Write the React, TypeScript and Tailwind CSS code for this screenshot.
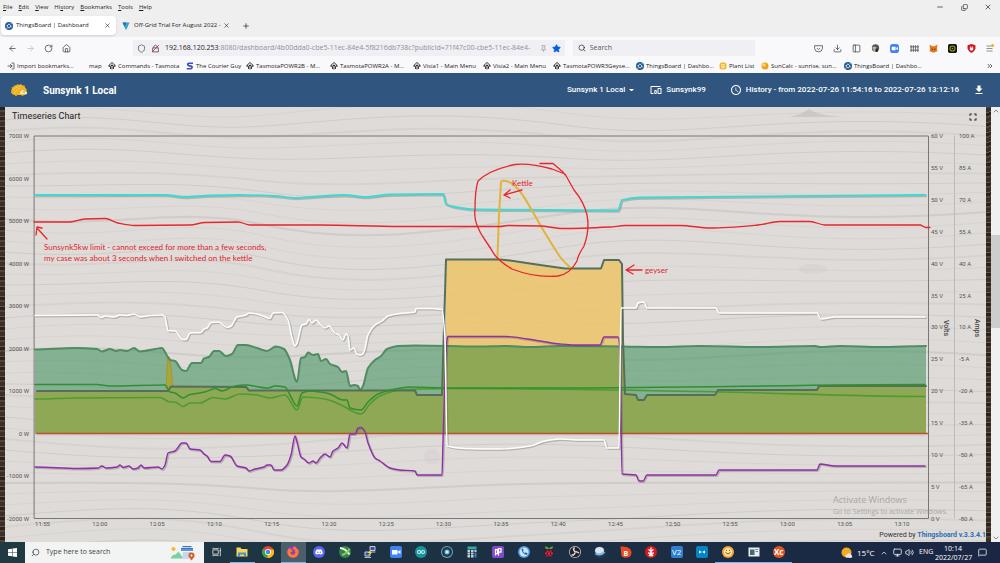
import type { ReactNode } from 'react'
import {
  ArrowLeft, ArrowRight, ChevronsRight, ChevronUp, ChevronDown, Copy, Download, House,
  LogIn, MessageSquare, Minus, Monitor, PanelLeft, Pin, Plus, RotateCw, Search, Shield, Star, Volume2, X,
} from 'lucide-react'
import { FaDiscord, FaFirefoxBrowser } from 'react-icons/fa'
import { MdAccessTime, MdDevicesOther, MdFileDownload, MdFullscreen } from 'react-icons/md'
import { SiArduino } from 'react-icons/si'

/* ---------- small drawings ---------- */

function ThingsBoardIcon() {
  return (
    <svg viewBox="0 0 16 16" className="size-2 shrink-0">
      <circle cx="8" cy="8" r="8" fill="#245a96" />
      <rect x="5" y="5" width="6" height="6" rx="1.5" fill="none" stroke="#fff" strokeWidth="1.6" transform="rotate(35 8 8)" />
      <path d="M11 4l2-2M3 14l2-3M3 7l2 0M11 9l3 1" stroke="#fff" strokeWidth="1.2" />
    </svg>
  )
}

function TasmotaIcon() {
  return (
    <svg viewBox="0 0 16 16" className="size-2 shrink-0" fill="none" stroke="#222" strokeWidth="1.8">
      <path d="M8 15V5M8 1L1 7.5l2 2.2M8 1l7 6.5-2 2.2M5 14V9l3-3 3 3v5M3.5 9V6M12.5 9V6" />
    </svg>
  )
}

function CourierIcon() {
  return (
    <svg viewBox="0 0 16 16" className="size-2 shrink-0" fill="none" stroke="#3c4ec4" strokeWidth="3.4">
      <path d="M14 2.5H7Q3.5 2.5 3.5 5t3 2.7l3.5.6q3 .7 2 3.2-.8 2-4 2H1.5" />
    </svg>
  )
}

function PlantIcon() {
  return (
    <svg viewBox="0 0 16 16" className="size-2 shrink-0">
      <rect x="1" y="1" width="14" height="14" rx="5" fill="#f4b52c" />
      <path d="M4 5.5h8M4 8.5h8M5 11.5h6" stroke="#fff" strokeWidth="1.4" />
    </svg>
  )
}

function SunIcon() {
  return (
    <svg viewBox="0 0 16 16" className="size-2 shrink-0">
      <circle cx="8" cy="8" r="7" fill="#f0a01e" />
      <circle cx="6" cy="6" r="3.5" fill="#ffd866" />
    </svg>
  )
}

function Hedgehog() {
  return (
    <svg viewBox="0 0 34 24" className="h-3 w-[17px] shrink-0">
      <path d="M0 13L2 10 1 7 5 6 6 3l4 0 3-3 3 2 4-2 3 3 4 0 1 4 3 3 0 9-6 3H6L3 20 0 18l1-2z" fill="#f0b323" />
      <path d="M5 11l3-2M9 15l3-3M9 7l4-1M15 5l4-1M14 10l3-1M6 17l3 1" stroke="#fbdf74" strokeWidth="1.5" />
      <path d="M19 15q3-5 7-2l7 4q0 4-6 4h-8q-2-3 0-6z" fill="#fbeaa8" />
      <circle cx="26" cy="16" r="1.2" fill="#333" />
      <circle cx="33" cy="18" r="1" fill="#333" />
      <path d="M8 21v3h4v-3M21 21v3h4v-3" fill="#d99a1d" />
    </svg>
  )
}

/* ---------- browser chrome ---------- */

const menus = [
  ['', 'F', 'ile'],
  ['', 'E', 'dit'],
  ['', 'V', 'iew'],
  ['Hi', 's', 'tory'],
  ['', 'B', 'ookmarks'],
  ['', 'T', 'ools'],
  ['', 'H', 'elp'],
]

const bookmarks: { label: string; icon: ReactNode; width: string }[] = [
  { label: 'Import bookmarks...', icon: <LogIn className="size-2 shrink-0" />, width: 'w-[82px]' },
  { label: 'map', icon: null, width: 'w-[19px]' },
  { label: 'Commands - Tasmota', icon: <TasmotaIcon />, width: 'w-[78px]' },
  { label: 'The Courier Guy', icon: <CourierIcon />, width: 'w-[60px]' },
  { label: 'TasmotaPOWR2B - M...', icon: <TasmotaIcon />, width: 'w-[84px]' },
  { label: 'TasmotaPOWR2A - M...', icon: <TasmotaIcon />, width: 'w-[83px]' },
  { label: 'Visia1 - Main Menu', icon: <TasmotaIcon />, width: 'w-[70px]' },
  { label: 'Visia2 - Main Menu', icon: <TasmotaIcon />, width: 'w-[70px]' },
  { label: 'TasmotaPOWR3Geyse...', icon: <TasmotaIcon />, width: 'w-[83px]' },
  { label: 'ThingsBoard | Dashbo...', icon: <ThingsBoardIcon />, width: 'w-[83px]' },
  { label: 'Plant List', icon: <PlantIcon />, width: 'w-[42px]' },
  { label: 'SunCalc - sunrise, sun...', icon: <SunIcon />, width: 'w-[83px]' },
  { label: 'ThingsBoard | Dashbo...', icon: <ThingsBoardIcon />, width: 'w-[83px]' },
]

const extensions: { name: string; icon: ReactNode }[] = [
  {
    name: 'Pocket',
    icon: (
      <svg viewBox="0 0 16 16" className="size-[9px]" fill="none" stroke="#555" strokeWidth="1.5">
        <path d="M1 3h14v5q-1 6-7 6T1 8zM5 7l3 3 3-3" />
      </svg>
    ),
  },
  { name: 'Downloads', icon: <Download className="size-[9px] text-[#444]" /> },
  { name: 'Sidebar', icon: <PanelLeft className="size-[9px] text-[#444]" /> },
  {
    name: 'Greasemonkey',
    icon: (
      <svg viewBox="0 0 16 16" className="size-[9px]">
        <circle cx="8" cy="7" r="6.5" fill="#555" />
        <path d="M2 6q4-4 9 1l-2 7H6z" fill="#c2b299" />
        <path d="M8 8h4v6H8z" fill="#222" />
      </svg>
    ),
  },
  {
    name: 'Zoom',
    icon: (
      <svg viewBox="0 0 16 16" className="size-[9px]">
        <rect width="16" height="16" rx="5" fill="#3d82f6" />
        <path d="M3 5h7v6H3zM11 7l3-2v6l-3-2z" fill="#fff" />
      </svg>
    ),
  },
  {
    name: 'Grid',
    icon: (
      <svg viewBox="0 0 16 16" className="size-[9px]" stroke="#555" strokeWidth="1.5">
        <path d="M2 2v12M6 2v12M10 2v12M14 2v12M0 5h16M0 11h16" />
      </svg>
    ),
  },
  {
    name: 'MetaMask',
    icon: (
      <svg viewBox="0 0 16 16" className="size-[9px]">
        <path d="M1 1l5 3h4l5-3-1 8 1 4-4 1-2 1H7l-2-1-4-1 1-4z" fill="#e5761b" />
        <path d="M4 8l3 1-1 2zM12 8L9 9l1 2z" fill="#4b2a13" />
      </svg>
    ),
  },
  {
    name: 'Shield',
    icon: (
      <svg viewBox="0 0 16 16" className="size-[9px]">
        <rect width="16" height="16" rx="3" fill="#161616" />
        <circle cx="8" cy="8" r="4.5" fill="none" stroke="#9a9a1c" strokeWidth="2" />
        <circle cx="8" cy="8" r="1.5" fill="#9a9a1c" />
      </svg>
    ),
  },
  {
    name: 'Ad blocker',
    icon: (
      <svg viewBox="0 0 16 16" className="size-[9px]">
        <path d="M8 0l7 2v6q-1 5-7 8-6-3-7-8V2z" fill="#d3141c" />
        <path d="M5 6h6v4q-3 3-6 0zM6 4h1v3H6zM9 4h1v3H9z" fill="#fff" />
      </svg>
    ),
  },
  {
    name: 'Menu',
    icon: (
      <svg viewBox="0 0 16 16" className="size-2">
        <path d="M1 4h9M1 9h12M1 14h12" stroke="#555" strokeWidth="1.3" />
        <circle cx="13" cy="3" r="3" fill="#f5a623" />
      </svg>
    ),
  },
]

function BrowserChrome() {
  return (
    <div className="bg-[#efeff0] font-['Open_Sans',sans-serif] text-[6px] text-[#1c1c22]">
      <div className="flex h-[14px] items-center justify-between pl-[3px]">
        <nav className="flex gap-[6px] leading-[10px]">
          {menus.map(([pre, key, post]) => (
            <button key={key + post}>
              {pre}<u>{key}</u>{post}
            </button>
          ))}
        </nav>
        <div className="flex">
          <button aria-label="Minimize" className="grid w-6 place-items-center"><Minus className="size-2" /></button>
          <button aria-label="Restore" className="grid w-6 place-items-center"><Copy className="size-[7px] -scale-x-100 rotate-180" /></button>
          <button aria-label="Close" className="grid w-6 place-items-center"><X className="size-2" /></button>
        </div>
      </div>
      <div className="flex h-[23px] items-center whitespace-nowrap">
        <div className="ml-px flex h-[19px] w-[115px] items-center rounded-sm bg-white px-1 shadow-sm">
          <ThingsBoardIcon />
          <span className="ml-[3px] flex-1">ThingsBoard | Dashboard</span>
          <button aria-label="Close tab" className="mr-px"><X className="size-[7px]" /></button>
        </div>
        <div className="ml-[6px] flex items-center">
          <svg viewBox="0 0 16 16" className="size-2 shrink-0">
            <path d="M1 1h14L9 15H7z" fill="#3fa0cc" />
            <path d="M1 1h8L5 9z" fill="#1c77a6" />
          </svg>
          <span className="ml-1">Off-Grid Trial For August 2022 -</span>
          <button aria-label="Close tab" className="ml-[2px]"><X className="size-[7px]" /></button>
        </div>
        <button aria-label="New tab" className="ml-3"><Plus className="size-2" /></button>
      </div>
      <div className="flex h-[22px] items-center bg-[#f9f9fb] text-[7px]">
        <div className="flex w-[133px] items-center gap-[9px] pl-2 text-[#444]">
          <button aria-label="Back"><ArrowLeft className="size-[9px]" /></button>
          <button aria-label="Forward" className="text-[#bbb]"><ArrowRight className="size-[9px]" /></button>
          <button aria-label="Reload"><RotateCw className="size-[9px]" /></button>
          <button aria-label="Home"><House className="size-[9px]" /></button>
        </div>
        <div className="flex h-4 min-w-0 flex-[438] items-center gap-[5px] bg-[#f0f0f4] px-1">
          <Shield className="size-[9px] shrink-0 text-[#555]" />
          <svg viewBox="0 0 16 16" className="size-[9px] shrink-0" fill="none" stroke="#555" strokeWidth="1.5">
            <rect x="3" y="7" width="10" height="7" />
            <path d="M5 7V4q3-4 6 0v3" />
            <path d="M2 14L14 2" stroke="#d7264c" />
          </svg>
          <div className="min-w-0 flex-1 whitespace-nowrap text-[#8f8f9d]">
            <span className="text-[#1c1c22]">192.168.120.253</span>
            :8080/dashboard/4b00dda0-cbe5-11ec-84e4-5f8216db738c?publicId=71f47c00-cbe5-11ec-84e4-
          </div>
          <Pin className="size-[7px] shrink-0 text-[#888]" />
          <Star className="size-[9px] shrink-0 fill-[#0060df] text-[#0060df]" />
        </div>
        <label className="ml-2 flex h-4 flex-[178] items-center gap-1 bg-[#f0f0f4] px-[5px]">
          <Search className="size-2 shrink-0" />
          <input aria-label="Search" placeholder="Search" className="w-full min-w-0 bg-transparent outline-none placeholder:text-[#555]" />
        </label>
        <div className="ml-[54px] flex w-[191px] justify-around">
          {extensions.map((e) => (
            <button key={e.name} aria-label={e.name} className="grid w-[19px] place-items-center">{e.icon}</button>
          ))}
        </div>
      </div>
      <div className="flex h-[14px] items-center bg-[#f9f9fb] pl-[7px]">
        {bookmarks.map((b, i) => (
          <a key={i} href="#" className={`flex shrink-0 items-center gap-[2px] whitespace-nowrap ${b.width}`}>
            {b.icon}
            <span>{b.label}</span>
          </a>
        ))}
        <button aria-label="More bookmarks" className="mr-[6px] ml-auto"><ChevronsRight className="size-2" /></button>
      </div>
    </div>
  )
}

/* ---------- dashboard ---------- */

function DashboardHeader() {
  return (
    <header className="flex h-[34px] items-center bg-[#305680] pr-[15px] pl-[11px] text-[8px] font-medium text-white">
      <Hedgehog />
      <h1 className="ml-[15px] flex-1 text-[10px] font-bold">Sunsynk 1 Local</h1>
      <button className="flex items-center gap-1">
        Sunsynk 1 Local
        <svg viewBox="0 0 8 4" className="w-[5px]"><path d="M0 0h8L4 4z" fill="#fff" /></svg>
      </button>
      <button className="ml-4 flex items-center gap-1"><MdDevicesOther className="size-3" />Sunsynk99</button>
      <button className="ml-6 flex items-center gap-1">
        <MdAccessTime className="size-3" />History - from 2022-07-26 11:54:16 to 2022-07-26 13:12:16
      </button>
      <button aria-label="Download" className="ml-[14px]"><MdFileDownload className="size-3" /></button>
    </header>
  )
}

const wattTicks = [7000, 6000, 5000, 4000, 3000, 2000, 1000, 0, -1000, -2000]
const voltTicks = [60, 55, 50, 45, 40, 35, 30, 25, 20, 15, 10, 5, 0]
const ampTicks = [100, 85, 70, 55, 40, 25, 10, -5, -20, -35, -50, -65, -80]
const timeTicks = ['11:55', '12:00', '12:05', '12:10', '12:15', '12:20', '12:25', '12:30', '12:35', '12:40', '12:45', '12:50', '12:55', '13:00', '13:05', '13:10']

const solar = '35,349.5 75,348 97,349 102,351.5 110,349 116,351 120,350 127,351 134,348 140,351.5 155,349 162,348 165,352 170,360 175,361 182,370 186,371 192,363 201,363 204,358.5 209,357 214,351 219,351 226,356 232,354 238,345 246,345 257,348 267,351 276,346.5 284,349 290,360 296,381 297,382 301,358 305,357 308,352.5 313,355 318,354 321,361 326,359 330,364 338,367 342,372 346,371 350,386 354,385 358,386 360,390 363,386 368,368 375,360 381,356 387,349 398,346 415,345.5 480,346.5 505,346 530,347 560,346 620,346.5 660,347 700,346 760,347 815,346 820,347 840,346 880,347 926,346'
const load = '37,391 168,391 171,386.5 246,387 249,390.5 415,390.5 417,395 442,395 446,259.5 500,259.5 510,260.5 540,265 565,268.5 601,268.5 604,260 619,260 622,264 623,340 625,394 636,395 638,400 644,400 647,395 715,395 718,390 817,390 819,386 926,386'
const battery = '35,315.5 97,315 101,317.5 105,316 114,317 120,315 127,315.5 134,314 140,317 150,315.5 162,315 165,317 168,330.5 175,331 183,339.5 186,339.5 190,333 201,332.5 204,329 207,328 211,322.5 219,322 227,327.5 231,326 237,317 246,315 249,313 257,314 263,316 270,318.5 273,313 282,312.5 288,320 292,338 295,346 297,343 302,325 306,324 309,319.5 312,323 316,320 320,324 325,328 329,326 335,333 339,335 343,340 346,334 348,336 350,350 354,348 357,354 361,355 364,352 368,335 375,325 382,321 388,316 400,313.5 415,312 416,308.5 430,308.5 442,309.5 445,340 447,446 465,448.5 500,449 530,446 545,441 560,439 580,440 604,440 607,448 619,448 621,308 636,308 638,303 644,302 647,308 716,308 719,313 817,313 821,319 835,317 925,317'
const current = '35,467 78,468.5 98,468 102,466 106,468 117,467 120,465 123,467.5 129,466 133,469 138,468 141,465 144,468 158,467 162,469 165,465 168,453 175,451 182,443 186,443 190,449 200,450 204,454 207,456 211,461.5 220,461.5 225,455 230,456 237,466 246,468 249,471 255,469 264,467 267,465 271,465 274,470 281,470 287,465 291,455 295,436 297,442 301,457 304,459 309,463 313,461 316,463 320,458 325,454 330,457 333,451 338,448 342,443 347,448 350,434 355,434 358,428 361,427.5 365,432 368,443 375,458 380,461 390,468 400,470 415,471 417,475 442,475 443,440 447,340 448,336.5 505,336.5 540,341 560,344 575,345 600,345 604,337 618,337 620,350 622,474 636,475 639,481 643,481 647,475 716,475 719,470 817,470 820,464 835,466 925,466'
const gridA = '35,384.5 97,384.5 110,386 165,385 170,392 175,393 183,398 190,394.5 205,392 215,388.5 222,391 235,386 245,385 268,388 275,386 285,387 290,395 297,406 302,393 310,391 320,392 330,394 343,400 347,400 350,408 361,410 368,402 378,394 395,389 410,387 446,388 560,388 925,384.5'
const gridB = '35,399 75,398 160,397.5 170,402 175,402 183,406.5 190,403 200,403 213,397.5 225,399 240,394 257,395 270,398 285,395 297,410 303,397 325,399 345,407 350,410 361,414 370,404 380,396 400,390 446,388.5 700,391.5 925,396.5'
const volts = '35,195 165,195 185,197 210,195.5 240,195 275,196 295,198 310,197 345,195 365,197 390,194.5 443,194 446,204 455,207 475,209.5 618,210.5 622,200 640,197.5 925,195'
const limit = '34,222 70,222 85,219 105,218.5 118,223 135,225.5 190,225 205,222.5 238,222 250,225 320,225 400,226.5 500,226.5 508,225.5 540,226 563,228.5 610,227 625,225.5 680,225.5 710,228 758,225 780,221.5 810,221.5 825,225 920,225 926,227.5 930,227.5'

// monotone cubic through the points, so the curve never overshoots a step
function smooth(points: string) {
  const p = points.split(' ').map((s) => s.split(',').map(Number))
  const slope = p.slice(1).map(([x, y], i) => (y - p[i][1]) / (x - p[i][0]))
  const tangent = p.map((_, i) => {
    const a = slope[i - 1] ?? 0
    const b = slope[i] ?? 0
    return a * b <= 0 ? 0 : (2 * a * b) / (a + b)
  })
  return p.slice(1).reduce((d, [x, y], i) => {
    const [x0, y0] = p[i]
    const h = (x - x0) / 3
    return `${d}C${x0 + h} ${y0 + tangent[i] * h} ${x - h} ${y - tangent[i + 1] * h} ${x} ${y}`
  }, `M${p[0][0]} ${p[0][1]}`)
}

function Series({ points, color, width }: { points: string; color: string; width: number }) {
  const d = smooth(points)
  return (
    <>
      <path d={d} transform="translate(1 1)" stroke="#555" strokeOpacity="0.3" strokeWidth={width + 0.5} />
      <path d={d} stroke={color} strokeWidth={width} />
    </>
  )
}

function WoodGrain() {
  const lines = Array.from({ length: 46 }, (_, i) => {
    const y = i * 11 - 20
    const a = 12 * Math.sin(i * 0.35)
    const b = 16 * Math.cos(i * 0.22)
    return `M0 ${y} C120 ${y - a} 170 ${y + b} 260 ${y + 6} S430 ${y - b} 560 ${y + a / 2} S760 ${y - a} 981 ${y + b / 2}`
  })
  return (
    <svg viewBox="0 0 981 435" preserveAspectRatio="none" className="absolute inset-0 size-full" fill="none">
      {lines.map((d, i) => (
        <path key={i} d={d} stroke="#aaa6a4" strokeOpacity={i % 3 === 0 ? 0.28 : 0.15} strokeWidth={i % 4 === 0 ? 2 : 1} />
      ))}
      <path d="M784 10q12-2 20-8 8 6 32 8z" fill="#bcb8b5" fillOpacity="0.5" />
      <ellipse cx="808" cy="162" rx="14" ry="5" fill="#aaa" fillOpacity="0.12" />
      <ellipse cx="427" cy="350" rx="8" ry="8" fill="#aab" fillOpacity="0.12" />
    </svg>
  )
}

function TimeseriesChart() {
  return (
    <svg viewBox="5 127 981 415" className="relative block w-full" fill="none" strokeLinejoin="round" strokeLinecap="round">
      {/* areas */}
      <path d={`${smooth(solar)}V434H35Z`} fill="#4f9a6a" fillOpacity="0.64" />
      <polygon points="446,260 500,260 510,260.5 540,265 565,268.5 601,268.5 604,260 619,260 622,264 623,346 446,346" fill="#edc36a" fillOpacity="0.85" />
      <polygon points="35,391 168,391 171,387 246,387 249,391 415,391 417,395 442,395 445,346 623,346 625,394 636,395 638,400 644,400 647,395 715,395 718,390 817,390 819,386 926,386 926,434 35,434" fill="#8fa852" fillOpacity="0.95" />
      <polygon points="166,388 168,356 170,358 173,386" fill="#a8a53e" stroke="#a39a2c" />

      {/* frame and the second right axis */}
      <path d="M34.5 136H928.5V518.5H34.5Z" stroke="#777" />
      <path d="M954.5 136V518" stroke="#bbb" />

      {/* series */}
      <path d={smooth(solar)} stroke="#4f8c62" strokeWidth="2" />
      <path d={smooth(gridB)} stroke="#4f9a32" strokeWidth="1.6" />
      <polyline points={load} stroke="#55705a" strokeWidth="2" />
      <path d={smooth(gridA)} stroke="#2f8f32" strokeWidth="1.5" />
      <path d="M35 435H925" stroke="#e3b9d5" />
      <path d="M37 433.5H928" stroke="#b5552a" strokeWidth="1.4" />
      <Series points={current} color="#9130a6" width={1.4} />
      <Series points={battery} color="#fff" width={1.5} />
      <Series points={volts} color="#3fd8d2" width={1.8} />
      <path d="M497.5 257L499 215L501 182Q502 180 506 181C520 184 528 205 545 233S562 260 570 267" stroke="#e0b43c" strokeWidth="2" />

      {/* hand-drawn notes */}
      <g stroke="#e8262b" strokeWidth="1.3">
        <path d={smooth(limit)} />
        <path d="M478 181C485 174 498 168 515 164.5Q530 163 552 169L565 174L574 190Q584 202 587 215Q590 230 584 246Q578 255 577 261Q570 274 558 276Q535 278 512 269Q500 262 494 254Q490 247 485 240Q473 223 475 210Q475 190 478 181M540 163.5H553L563 172L565 175" />
        <path d="M522 190L504 195M510 190L504 195L510 198M642 270H626M634 265L626 270L633 274M47 239L37 228M36 235L37 227L42 228" />
      </g>
      <g fill="#e0262b" className="font-['Lato',sans-serif] text-[8px]">
        <text x="44" y="250">Sunsynk5kw limit - cannot exceed for more than a few seconds,</text>
        <text x="44" y="261">my case was about 3 seconds when I switched on the kettle</text>
        <text x="512" y="186">Kettle</text>
        <text x="645" y="273">geyser</text>
      </g>

      {/* axis labels */}
      <g fill="#545454" className="text-[6px]">
        {wattTicks.map((t, i) => <text key={t} x="29" y={138 + i * 42.5} textAnchor="end">{t} W</text>)}
        {voltTicks.map((t, i) => <text key={t} x="931" y={138 + i * 31.9}>{t} V</text>)}
        {ampTicks.map((t, i) => <text key={t} x="959" y={138 + i * 31.9}>{t} A</text>)}
        {timeTicks.map((t, i) => <text key={t} x={42.5 + i * 57.3} y="526" textAnchor="middle">{t}</text>)}
      </g>
      <g fill="#444" textAnchor="middle" className="text-[7px] font-medium">
        <text transform="translate(944 328) rotate(90)">Volts</text>
        <text transform="translate(975 328) rotate(90)">Amps</text>
      </g>
      <g fill="#aaa8a6" className="font-['Open_Sans',sans-serif]">
        <text x="833" y="503" className="text-[9px]">Activate Windows</text>
        <text x="833" y="514" className="text-[7px]">Go to Settings to activate Windows.</text>
      </g>
    </svg>
  )
}

function Dashboard() {
  return (
    <main className="flex flex-1 bg-[repeating-linear-gradient(178deg,#2c221d_0_3px,#544438_3px_5px,#3b2e27_5px_9px,#65564a_9px_10px)]">
      <section className="relative ml-[5px] min-w-0 flex-1 bg-[#dfdbd8]">
        <WoodGrain />
        <div className="relative flex h-5 items-center justify-between pr-[7px] pl-[7px]">
          <h2 className="text-[9px] text-[#222]">Timeseries Chart</h2>
          <button aria-label="Fullscreen" className="text-[#333]"><MdFullscreen className="size-3" /></button>
        </div>
        <TimeseriesChart />
        <p className="absolute right-0 bottom-[2px] text-[7px] leading-[10px] whitespace-nowrap text-[#333]">
          Powered by <a href="#" className="font-bold text-[#2a6fb5]">Thingsboard v.3.3.4.1</a>
        </p>
      </section>
      <div className="ml-[5px] flex w-[9px] flex-col items-center bg-[#f0f0f0] text-[#555]">
        <ChevronUp className="size-2" />
        <div className="mt-[120px] h-[93px] w-full bg-[#cdcdcd]" />
        <ChevronDown className="mt-auto size-2" />
      </div>
    </main>
  )
}

/* ---------- taskbar ---------- */

function Disc({ fill, children }: { fill: string; children?: ReactNode }) {
  return (
    <svg viewBox="0 0 24 24" className="size-3">
      <circle cx="12" cy="12" r="12" fill={fill} />
      {children}
    </svg>
  )
}

function Tile({ fill, children }: { fill: string; children?: ReactNode }) {
  return (
    <svg viewBox="0 0 24 24" className="size-3">
      <rect width="24" height="24" rx="4" fill={fill} />
      {children}
    </svg>
  )
}

const apps: { name: string; icon: ReactNode; open?: boolean; active?: boolean }[] = [
  { name: 'Task View', icon: <svg viewBox="0 0 24 24" className="size-[10px]" fill="none" stroke="#ddd" strokeWidth="2"><path d="M2 7h13v10H2zM2 2v2h13V2M2 22v-2h13v2M20 2v20M18 9h4" /></svg> },
  { name: 'File Explorer', open: true, icon: <svg viewBox="0 0 24 24" className="size-3"><path d="M1 3h8l2 3h12v15H1z" fill="#f8d45c" /><path d="M4 13h16v8h-4v-4H8v4H4z" fill="#3f92d2" /></svg> },
  {
    name: 'Chrome',
    icon: (
      <Disc fill="#e94335">
        <path d="M12 12L2 5.5A12 12 0 0 0 11 24z" fill="#34a353" />
        <path d="M12 12h-1v12A12 12 0 0 0 23 7H12z" fill="#fbbc05" />
        <circle cx="12" cy="12" r="6" fill="#fff" />
        <circle cx="12" cy="12" r="4.5" fill="#4285f4" />
      </Disc>
    ),
  },
  { name: 'Firefox', active: true, open: true, icon: <span className="grid size-3 place-items-center rounded-full bg-[#8a3fc8]"><FaFirefoxBrowser className="size-3 text-[#ff7a2c]" /></span> },
  { name: 'Discord', icon: <span className="grid size-3 place-items-center rounded-full bg-[#5865f2]"><FaDiscord className="size-2 text-white" /></span> },
  { name: 'Remote', icon: <Disc fill="#38804b"><path d="M2 4q10 0 19 13" stroke="#e4f4dc" strokeWidth="4" fill="none" /><path d="M21 5q-3 9-15 13" stroke="#7ccf58" strokeWidth="4" fill="none" /></Disc> },
  { name: 'PuTTY', icon: <svg viewBox="0 0 24 24" className="size-3"><path d="M12 1h10v8H12zM2 12h10v8H2z" fill="#3152a8" stroke="#ccc" strokeWidth="2" /><path d="M15 9l-6 4 6 0-6 5" stroke="#fbe03c" strokeWidth="2" fill="none" /><path d="M1 23h13M13 12h10" stroke="#bbb" strokeWidth="2" /></svg> },
  { name: 'Zoom', icon: <Tile fill="#3e82f4"><path d="M4 8h11v9H4zM16 11l5-3v8l-5-3z" fill="#fff" /></Tile> },
  { name: 'Arduino', icon: <span className="grid size-3 place-items-center rounded-full bg-[#16969a]"><SiArduino className="size-2 text-white" /></span> },
  { name: 'Recorder', icon: <Disc fill="#7f9dad"><circle cx="12" cy="12" r="10" fill="#1d3a4c" /><circle cx="12" cy="12" r="5" fill="#6cc3e8" /><circle cx="12" cy="12" r="2" fill="#fff" /></Disc> },
  { name: 'Calculator', icon: <svg viewBox="0 0 24 24" className="size-3"><path d="M3 1h18v6H3z" fill="#36aaa2" /><path d="M3 8h5v4H3zM10 8h5v4h-5zM17 8h4v4h-4zM3 13h5v4H3zM10 13h5v4h-5zM3 18h5v5H3zM10 18h5v5h-5z" fill="#c6d2d8" /><path d="M17 13h4v10h-4z" fill="#3d7fc0" /></svg> },
  { name: 'Packet', icon: <Tile fill="#8348cc"><path d="M7 19V7h4v8H6M13 19V5h5v7h-5" stroke="#fff" strokeWidth="2.5" fill="none" /></Tile> },
  { name: 'Phone', icon: <Disc fill="#4b9be0"><circle cx="12" cy="12" r="9" fill="#c8e4f8" /><path d="M7 6q1 10 11 12l1-4-4-1-2 1q-2-1-3-4l1-2-1-3z" fill="#2464b0" /></Disc> },
  {
    name: 'Raspberry Pi',
    icon: (
      <svg viewBox="0 0 24 24" className="size-3">
        <path d="M12 6Q4 8 4 1q7-1 8 5 1-6 8-5 0 7-8 5z" fill="#5fa52a" />
        <path d="M5 9q7-4 14 0 4 6-1 11-6 5-12 0-5-5-1-11z" fill="#4a0f20" />
        <path d="M7 9h4v4H7zM13 9h4v4h-4zM4 13h4v4H4zM10 13h4v5h-4zM16 13h4v4h-4zM7 18h4v3H7zM13 18h4v3h-4z" fill="#d6264e" />
      </svg>
    ),
  },
  { name: 'OBS', icon: <Disc fill="#c8c8c8"><circle cx="12" cy="12" r="10.5" fill="#23232a" /><path d="M11 3q-4 5 1 8M20 14q-5-4-8-2M5 18q6 1 7-5" stroke="#ddd" strokeWidth="3" fill="none" /></Disc> },
  { name: 'Steam', icon: <Disc fill="#243a52"><ellipse cx="11" cy="9" rx="9" ry="7" fill="#d8e4ee" /><path d="M3 15q10 5 18-3" stroke="#7fb7e4" strokeWidth="4" fill="none" /></Disc> },
  { name: 'Bitdefender', icon: <svg viewBox="0 0 24 24" className="size-3"><path d="M1 1q14-1 20 6 5 8-2 15-12 4-16-2z" fill="#ee4a22" /><text x="7" y="19" fill="#fff" className="text-[14px] font-bold">B</text></svg> },
  { name: 'Cherry', icon: <Disc fill="#d8191f"><path d="M12 3v18M7 7l5 4 5-4M6 14h12M8 20l4-5 4 5" stroke="#fff" strokeWidth="2.5" fill="none" /></Disc> },
  { name: 'VNC', icon: <Tile fill="#2f80d4"><text x="2" y="18" fill="#fff" className="text-[16px]">V2</text></Tile> },
  { name: 'Multi', icon: <Tile fill="#0784c4"><path d="M6 9l6 3 6-3v6l-6-3-6 3z" fill="#e8fbff" /></Tile> },
  { name: 'Smiley', open: true, icon: <Disc fill="#f2a83a"><circle cx="12" cy="12" r="8" fill="#fbe3a0" /><path d="M7 13q5 6 10 0M8 9h2M14 9h2" stroke="#8a5a10" strokeWidth="2" fill="none" /></Disc> },
  { name: 'Viewer', open: true, icon: <svg viewBox="0 0 24 24" className="size-3"><path d="M1 3h22v18H1z" fill="#e8eef0" /><path d="M4 7h9v11H4z" fill="#3c6e70" /><path d="M15 7h5M15 11h5" stroke="#789" strokeWidth="2" /></svg> },
  { name: 'XCTU', open: true, icon: <Disc fill="#e2551f"><text x="2" y="18" fill="#fff" className="text-[16px] font-bold">Xc</text></Disc> },
]

function Taskbar() {
  return (
    <footer className="flex h-[21px] items-center bg-linear-to-r from-[#1f3a42] to-[#1a2644] font-['Open_Sans',sans-serif] text-[7px] text-white">
      <button aria-label="Start" className="grid w-[25px] place-items-center">
        <svg viewBox="0 0 18 18" className="size-[9px]" fill="#fff"><path d="M0 2.5L8 1.3V8.5H0zM9 1.2L18 0V8.5H9zM0 9.5H8V16.7L0 15.5zM9 9.5H18V18L9 16.8z" /></svg>
      </button>
      <label className="flex h-full w-[179px] items-center bg-[#f2f3f3] pr-2 pl-[6px] text-[#444]">
        <Search className="size-[9px] shrink-0 -scale-x-100" />
        <input aria-label="Type here to search" placeholder="Type here to search" className="ml-[6px] min-w-0 flex-1 bg-transparent outline-none placeholder:text-[#444]" />
        <svg viewBox="0 0 52 32" className="h-4 w-[26px]">
          <circle cx="7" cy="8" r="4" fill="#f6b82c" />
          <path d="M1 27q3-8 10-8l6-6 10 14z" fill="#7dd0a4" />
          <path d="M22 7h24M25 3h18M22 10h24" stroke="#3775c8" strokeWidth="2.5" />
          <path d="M26 14h17l-6 14H24z" fill="#c8d8e8" />
          <path d="M43 31l-6-8q-1-8 6-8t6 8z" fill="#d95a2c" />
          <circle cx="43" cy="21" r="2" fill="#fff" />
        </svg>
      </label>
      <div className="flex h-full w-[588px] shrink-0">
        {apps.map((a) => (
          <button
            key={a.name}
            aria-label={a.name}
            className={`grid h-full flex-1 place-items-center border-b ${a.open ? 'border-[#76b9ed]' : 'border-transparent'} ${a.active ? 'bg-[#4a5f69]' : ''}`}
          >
            {a.icon}
          </button>
        ))}
      </div>
      <div className="ml-auto flex items-center pr-[13px]">
        <svg viewBox="0 0 24 24" className="size-3"><circle cx="11" cy="11" r="10" fill="#f8a81c" /><path d="M10 21q-3-5 3-7 5-4 8 2 4 5-2 6z" fill="#e4e8f0" /></svg>
        <span className="ml-1 w-[23px] text-[8px]">15°C</span>
        <ChevronUp className="size-2" />
        <Monitor className="ml-[5px] size-[9px]" />
        <Volume2 className="ml-[3px] size-[9px]" />
        <span className="ml-[5px] w-4">ENG</span>
        <time className="w-9 text-center leading-[9px]">10:14<br />2022/07/27</time>
        <MessageSquare className="ml-[7px] size-[9px]" />
      </div>
    </footer>
  )
}

export default function App() {
  return (
    <div className="flex min-h-screen flex-col font-['Roboto',sans-serif]">
      <BrowserChrome />
      <DashboardHeader />
      <Dashboard />
      <Taskbar />
    </div>
  )
}
